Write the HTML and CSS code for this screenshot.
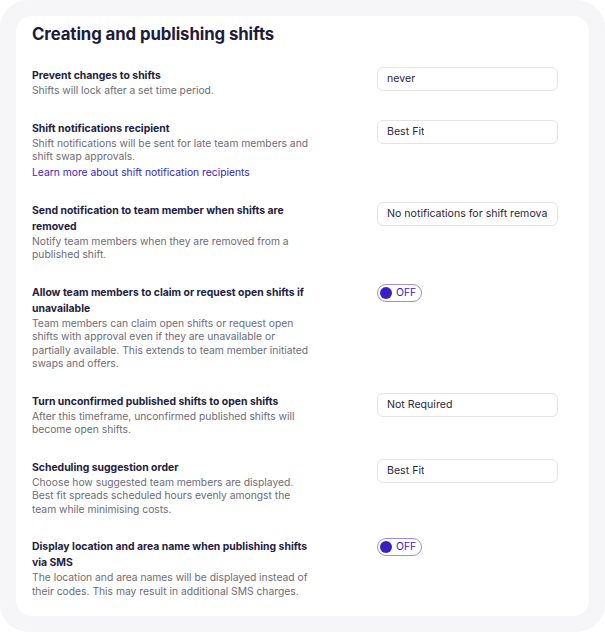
FILE: index.html
```html
<!DOCTYPE html>
<html>
<head>
<meta charset="utf-8">
<link rel="stylesheet" href="styles.css">
</head>
<body>
<div class="frame">
  <div class="card">
    <h1 class="title">Creating and publishing shifts</h1>
    <div class="rows">
      <div class="row">
        <div class="info">
          <div class="label">Prevent changes to shifts</div>
          <div class="desc">Shifts will lock after a set time period.</div>
        </div>
        <div class="control"><div class="select"><span class="value">never</span></div></div>
      </div>
      <div class="row">
        <div class="info">
          <div class="label">Shift notifications recipient</div>
          <div class="desc">Shift notifications will be sent for late team members and shift swap approvals.</div>
          <a class="link" href="#">Learn more about shift notification recipients</a>
        </div>
        <div class="control"><div class="select"><span class="value">Best Fit</span></div></div>
      </div>
      <div class="row">
        <div class="info">
          <div class="label">Send notification to team member when shifts are removed</div>
          <div class="desc">Notify team members when they are removed from a published shift.</div>
        </div>
        <div class="control"><div class="select"><span class="value">No notifications for shift removals</span></div></div>
      </div>
      <div class="row">
        <div class="info">
          <div class="label">Allow team members to claim or request open shifts if unavailable</div>
          <div class="desc">Team members can claim open shifts or request open shifts with approval even if they are unavailable or partially available. This extends to team member initiated swaps and offers.</div>
        </div>
        <div class="control"><div class="toggle"><span class="knob"></span><span class="toggle-text">OFF</span></div></div>
      </div>
      <div class="row">
        <div class="info">
          <div class="label">Turn unconfirmed published shifts to open shifts</div>
          <div class="desc">After this timeframe, unconfirmed published shifts will become open shifts.</div>
        </div>
        <div class="control"><div class="select"><span class="value">Not Required</span></div></div>
      </div>
      <div class="row">
        <div class="info">
          <div class="label">Scheduling suggestion order</div>
          <div class="desc">Choose how suggested team members are displayed. Best fit spreads scheduled hours evenly amongst the team while minimising costs.</div>
        </div>
        <div class="control"><div class="select"><span class="value">Best Fit</span></div></div>
      </div>
      <div class="row">
        <div class="info">
          <div class="label">Display location and area name when publishing shifts via SMS</div>
          <div class="desc">The location and area names will be displayed instead of their codes. This may result in additional SMS charges.</div>
        </div>
        <div class="control"><div class="toggle"><span class="knob"></span><span class="toggle-text">OFF</span></div></div>
      </div>
    </div>
  </div>
</div>
</body>
</html>
```

FILE: styles.css
```css
* { box-sizing: border-box; }
html, body { margin: 0; padding: 0; background: #ffffff; }
body { font-family: Inter, "Noto Sans", sans-serif; }
.frame {
  width: 605px;
  height: 632px;
  padding: 16px;
  background: #f6f6f9;
  border-radius: 28px;
}
.card {
  background: #ffffff;
  border-radius: 16px;
  height: 600px;
  padding: 6px 16px 16px 16px;
}
.title {
  margin: 0;
  font-size: 16.8px;
  line-height: 24px;
  font-weight: 700;
  color: #1e1c3a;
  letter-spacing: -0.1px;
}
.rows {
  display: flex;
  flex-direction: column;
  gap: 23px;
  margin-top: 22px;
}
.row {
  display: flex;
  justify-content: space-between;
  align-items: flex-start;
}
.info {
  width: 282px;
  display: flex;
  flex-direction: column;
}
.label {
  font-size: 10.4px;
  line-height: 16px;
  font-weight: 700;
  color: #23213f;
}
.desc {
  font-size: 10.3px;
  line-height: 13.5px;
  color: #6d6c78;
}
.link {
  font-size: 10.3px;
  line-height: 16px;
  color: #3a22c4;
  text-decoration: none;
}
.control {
  width: 196px;
  padding-right: 15px;
  margin-top: -1px;
}
.select {
  width: 181px;
  height: 24px;
  border: 1px solid #e3e3e8;
  border-radius: 6px;
  padding: 0 9px;
  display: flex;
  align-items: center;
}
.value {
  font-size: 10.6px;
  line-height: 22px;
  color: #2a283f;
  white-space: nowrap;
  overflow: hidden;
}
.toggle {
  width: 45px;
  height: 18px;
  border: 1px solid #9a8ee0;
  border-radius: 9px;
  display: flex;
  align-items: center;
  gap: 4px;
  padding-left: 2px;
}
.knob {
  width: 12px;
  height: 12px;
  border-radius: 50%;
  background: #3a1fc1;
}
.toggle-text {
  font-size: 10.4px;
  line-height: 12px;
  color: #3a1fc1;
}
```
